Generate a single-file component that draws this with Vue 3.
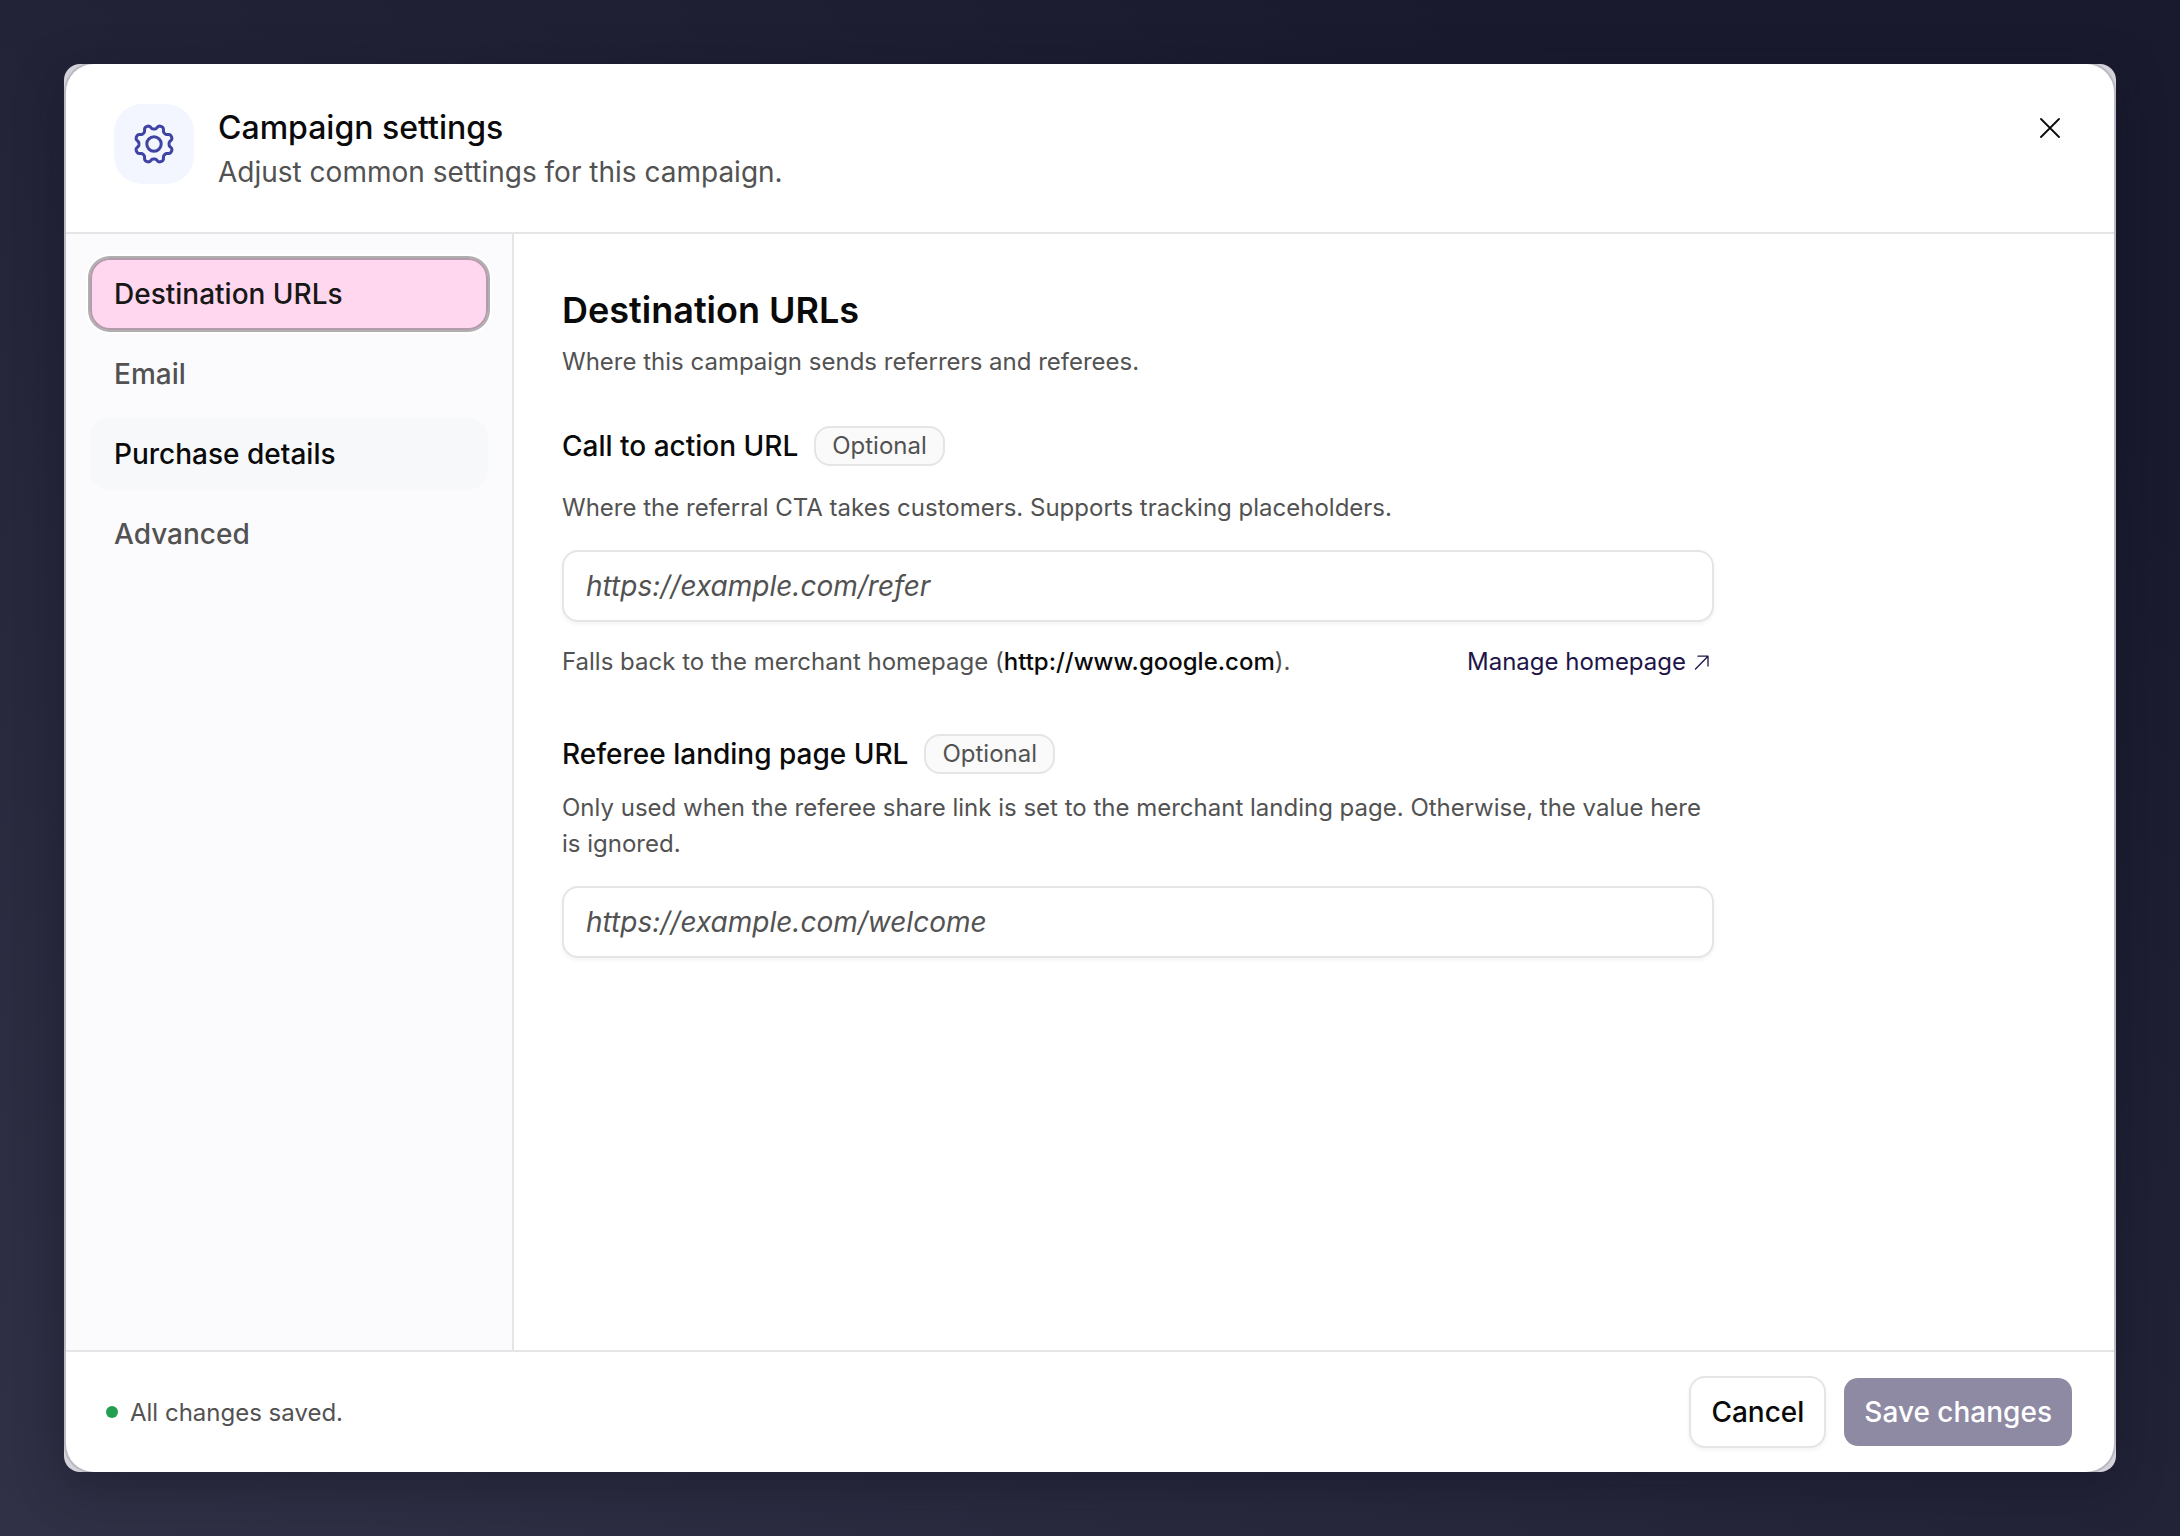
<script setup>
import { ref } from 'vue'

const sections = ['Destination URLs', 'Email', 'Purchase details', 'Advanced']
const active = ref('Destination URLs')
const hovered = 'Purchase details'
const ctaUrl = ref('')
const landingUrl = ref('')

// Eight rounded teeth, with a notch on each axis and diagonal
const gearPoints = Array.from({ length: 192 }, (_, i) => {
  const a = (i / 192) * Math.PI * 2
  const r = 17 - 2.1 * Math.tanh(1.6 * Math.cos(8 * a))
  return `${(20 + r * Math.cos(a)).toFixed(2)} ${(20 + r * Math.sin(a)).toFixed(2)}`
})
const gearPath = `M${gearPoints.join('L')}Z`
</script>

<template>
  <div class="backdrop">
    <div class="frame">
      <section class="dialog" role="dialog" aria-labelledby="dialog-title">
        <header class="header">
          <span class="badge" aria-hidden="true">
            <svg width="40" height="40" viewBox="0 0 40 40" fill="none" stroke="#3f43a3" stroke-width="3" stroke-linejoin="round">
              <path :d="gearPath" />
              <circle cx="20" cy="20" r="7.2" />
            </svg>
          </span>
          <div class="heading">
            <h1 id="dialog-title">Campaign settings</h1>
            <p>Adjust common settings for this campaign.</p>
          </div>
          <button class="close" type="button" aria-label="Close">
            <svg width="20" height="20" viewBox="0 0 20 20" fill="none" stroke="#0a0a0a" stroke-width="1.8" stroke-linecap="round">
              <path d="M1 1L19 19M19 1L1 19" />
            </svg>
          </button>
        </header>

        <div class="body">
          <nav class="sidebar">
            <button
              v-for="name in sections"
              :key="name"
              type="button"
              class="nav-item"
              :class="{ active: name === active, hovered: name === hovered }"
              @click="active = name"
            >{{ name }}</button>
          </nav>

          <main class="content">
            <div class="form">
              <h2>Destination URLs</h2>
              <p class="help intro">Where this campaign sends referrers and referees.</p>

              <div class="field">
                <div class="label-row">
                  <label for="cta">Call to action URL</label>
                  <span class="pill">Optional</span>
                </div>
                <p class="help single">Where the referral CTA takes customers. Supports tracking placeholders.</p>
                <input id="cta" v-model="ctaUrl" type="url" placeholder="https://example.com/refer" />
                <div class="note">
                  <p class="help">Falls back to the merchant homepage (<strong>http://www.google.com</strong>).</p>
                  <a href="#">
                    <span>Manage homepage</span>
                    <svg width="16" height="16" viewBox="0 0 16 16" fill="none" stroke="currentColor" stroke-width="1.3" stroke-linecap="round" stroke-linejoin="round" aria-hidden="true">
                      <path d="M1.5 15L14 2.2M4 2.2H14V12" />
                    </svg>
                  </a>
                </div>
              </div>

              <div class="field">
                <div class="label-row">
                  <label for="landing">Referee landing page URL</label>
                  <span class="pill">Optional</span>
                </div>
                <p class="help">Only used when the referee share link is set to the merchant landing page. Otherwise, the value here is ignored.</p>
                <input id="landing" v-model="landingUrl" type="url" placeholder="https://example.com/welcome" />
              </div>
            </div>
          </main>
        </div>

        <footer class="footer">
          <p class="status"><span class="dot"></span>All changes saved.</p>
          <button class="btn cancel" type="button">Cancel</button>
          <button class="btn save" type="button" disabled>Save changes</button>
        </footer>
      </section>
    </div>
  </div>
</template>

<style>
body {
  background: #26263a;
}
</style>

<style scoped>
:where(.backdrop, .backdrop *) {
  box-sizing: border-box;
}

h1,
h2,
p {
  margin: 0;
}

.backdrop {
  display: flex;
  min-height: 100vh;
  padding: 64px;
  background: linear-gradient(to top right, #303046, #1a1a2e 85%);
  color: #0a0a0a;
  font-family: Inter, "Liberation Sans", sans-serif;
  font-size: 28px;
}

button,
input {
  font: inherit;
  color: inherit;
}

.frame {
  display: flex;
  flex: 1;
  overflow: hidden;
  border-radius: 16px;
  background: #d4d3d9;
  box-shadow: 0 12px 48px rgba(16, 16, 32, 0.4);
}

.dialog {
  display: flex;
  flex: 1;
  flex-direction: column;
  overflow: hidden;
  margin: 0 2px;
  border-radius: 28px;
  background: #fff;
  box-shadow: 0 0 0 2px #bbb9c2;
}

.header {
  display: flex;
  align-items: flex-start;
  gap: 24px;
  padding: 40px 48px;
  border-bottom: 2px solid #e5e5e5;
}

.badge {
  display: grid;
  place-items: center;
  width: 80px;
  height: 80px;
  border-radius: 28px;
  background: #f3f6ff;
}

.heading {
  flex: 1;
}

h1 {
  font-size: 32px;
  font-weight: 500;
  line-height: 48px;
}

.heading p {
  color: #525252;
  line-height: 40px;
}

.close {
  display: grid;
  place-items: center;
  width: 32px;
  height: 32px;
  margin-top: 8px;
  padding: 0;
  border: 0;
  background: none;
}

.body {
  display: flex;
  flex: 1;
}

.sidebar {
  display: flex;
  flex-direction: column;
  gap: 8px;
  width: 448px;
  padding: 24px;
  border-right: 2px solid #e5e5e5;
  background: #fbfbfd;
}

.nav-item {
  height: 72px;
  padding: 0 24px;
  border: 0;
  border-radius: 20px;
  background: none;
  color: #525252;
  font-weight: 500;
  text-align: left;
}

.nav-item.hovered {
  background: #f7f8fa;
  color: #0a0a0a;
}

.nav-item.active {
  background: #ffd8ef;
  color: #171717;
  box-shadow: inset 0 0 0 2px #b29bab, 0 0 0 2px #b0afb0, 0 0 0 4px #fff;
}

.content {
  flex: 1;
  padding: 48px;
}

.form {
  max-width: 1152px;
}

h2 {
  font-size: 36px;
  font-weight: 600;
  line-height: 56px;
}

.help {
  color: #525252;
  font-size: 24px;
  line-height: 36px;
}

.intro {
  margin-top: 6px;
}

.field {
  margin-top: 46px;
}

.field + .field {
  margin-top: 54px;
}

.label-row {
  display: flex;
  align-items: center;
  gap: 16px;
  height: 40px;
  margin-bottom: 16px;
}

label {
  font-weight: 500;
}

.pill {
  height: 40px;
  padding: 0 16px;
  border: 2px solid #e5e5e5;
  border-radius: 16px;
  background: #fafafa;
  color: #525252;
  font-size: 24px;
  line-height: 36px;
}

.single {
  margin-top: 24px;
}

input {
  display: block;
  width: 100%;
  height: 72px;
  margin: 24px 0 0;
  padding: 0 22px;
  border: 2px solid #e5e5e5;
  border-radius: 16px;
  background: #fff;
  box-shadow: 0 2px 4px rgba(0, 0, 0, 0.05);
}

input::placeholder {
  color: #525252;
  font-style: italic;
  opacity: 1;
}

.note {
  display: flex;
  justify-content: space-between;
  margin-top: 22px;
  padding-right: 4px;
}

strong {
  color: #0a0a0a;
  font-weight: 500;
}

a {
  display: flex;
  align-items: center;
  gap: 8px;
  color: #1e1548;
  font-size: 24px;
  line-height: 36px;
  text-decoration: none;
}

.footer {
  display: flex;
  align-items: center;
  gap: 18px;
  padding: 24px 42px 24px 40px;
  border-top: 2px solid #e5e5e5;
}

.status {
  display: flex;
  flex: 1;
  align-items: center;
  gap: 12px;
  color: #525252;
  font-size: 24px;
}

.dot {
  width: 12px;
  height: 12px;
  border-radius: 50%;
  background: #22a04f;
}

.btn {
  border-radius: 16px;
  font-weight: 500;
}

.cancel {
  height: 72px;
  padding: 0 20px;
  border: 2px solid #e5e5e5;
  background: #fff;
  box-shadow: 0 2px 4px rgba(0, 0, 0, 0.05);
}

.save {
  height: 68px;
  padding: 0 20px;
  border: 0;
  border-radius: 14px;
  background: #8f8aa4;
  color: #fff;
}
</style>
